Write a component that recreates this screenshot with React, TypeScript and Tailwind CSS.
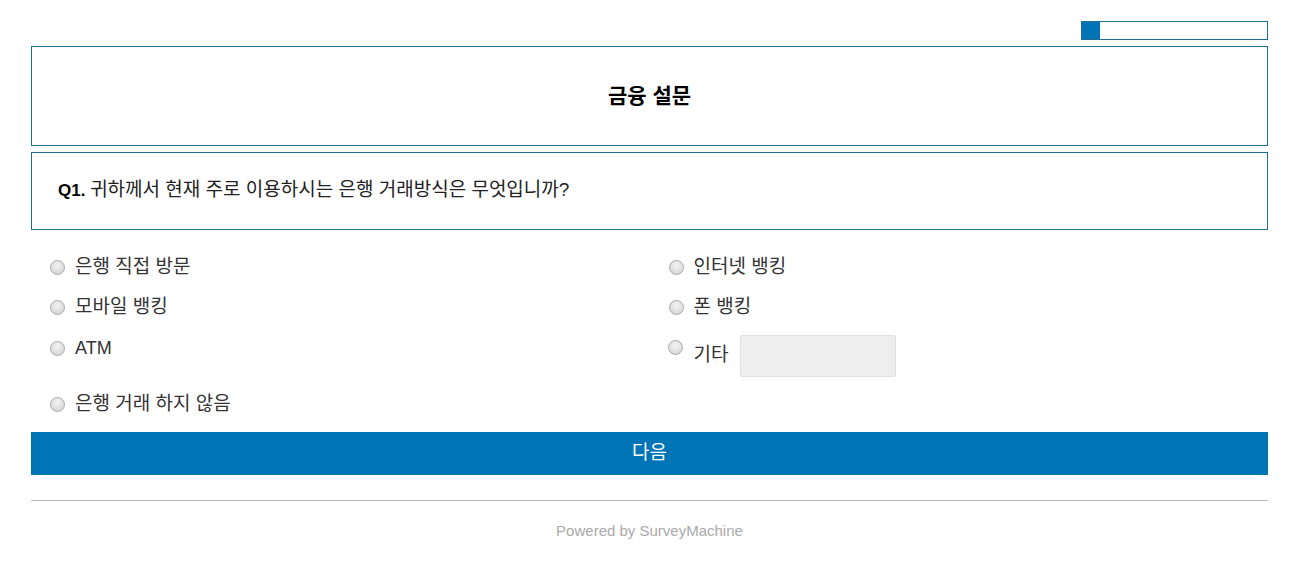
import React from "react";

const font = { fontFamily: '"Liberation Sans", "Noto Sans CJK KR", Arial, sans-serif' };

function Radio() {
  return (
    <span className="inline-block w-[15px] h-[15px] rounded-full border border-[#a9a9a9] bg-[radial-gradient(circle_at_50%_35%,#f4f4f4,#cfcfcf)] shrink-0" />
  );
}

function Option({ label }: { label: string }) {
  return (
    <div className="flex items-center h-[40px] pl-[19px] gap-[10px]">
      <Radio />
      <span className="text-[19px] text-[#333]">{label}</span>
    </div>
  );
}

export default function App() {
  return (
    <div className="w-[1302px] min-h-[567px] bg-white" style={font}>
      <div className="ml-[31px] w-[1237px] pt-[21px]">
        <div className="flex justify-end">
          <div className="w-[187px] h-[19px] border border-[#1f6f99] flex">
            <div className="w-[18px] h-full bg-[#0074b5]" />
          </div>
        </div>
        <div className="mt-[6px] h-[100px] border border-[#1f6f99] flex items-center justify-center">
          <h1 className="text-[21px] font-bold text-black">금융 설문</h1>
        </div>
        <div className="mt-[6px] h-[78px] border border-[#1f7096] flex items-center pl-[26px] pb-[2px]">
          <p className="text-[17px] text-[#222]">
            <span className="font-bold text-black">Q1.</span>{" "}
            <span className="text-[19px]">귀하께서 현재 주로 이용하시는 은행 거래방식은 무엇입니까?</span>
          </p>
        </div>
        <div className="mt-[17px] grid grid-cols-2">
          <Option label="은행 직접 방문" />
          <Option label="인터넷 뱅킹" />
          <Option label="모바일 뱅킹" />
          <Option label="폰 뱅킹" />
          <div className="h-[57px] pt-[14px] pl-[19px] flex items-start gap-[10px]">
            <Radio />
            <span className="text-[18px] text-[#333] leading-[15px]">ATM</span>
          </div>
          <div className="h-[57px] pt-[8px] pl-[18px] flex items-start">
            <div className="mt-[3px]"><Radio /></div>
            <span className="ml-[11px] mt-[8px] text-[19px] text-[#333] leading-[24px]">기타</span>
            <input className="ml-[12px] w-[156px] h-[42px] bg-[#eeeeee] border border-[#e0e0e0] rounded-[2px] outline-none" />
          </div>
          <Option label="은행 거래 하지 않음" />
          <div />
        </div>
        <button className="mt-[8px] w-full h-[43px] bg-[#0075b6] text-white text-[19px]" style={font}>
          다음
        </button>
        <div className="mt-[25px] border-t border-[#bbbbbb]" />
        <div className="mt-[19px] text-center text-[15px] text-[#aaaaaa]">Powered by SurveyMachine</div>
      </div>
    </div>
  );
}
